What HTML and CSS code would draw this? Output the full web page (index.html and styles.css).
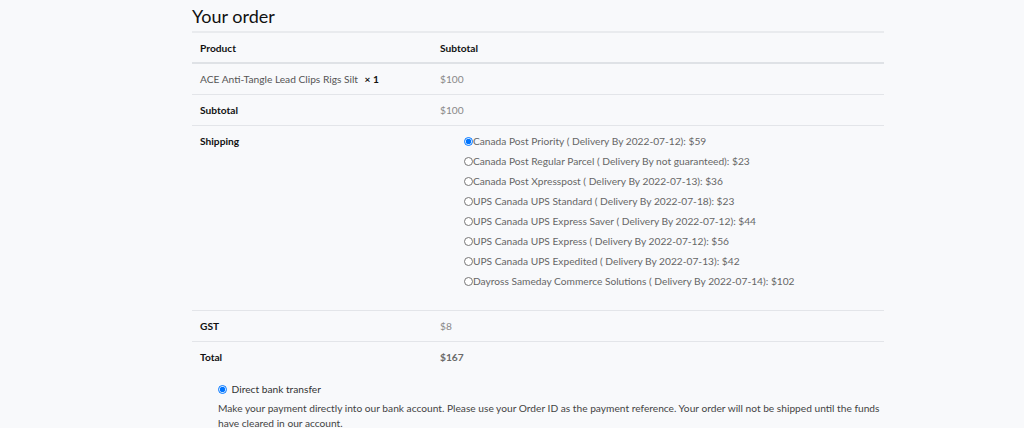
FILE: index.html
```html
<!DOCTYPE html>
<html lang="en">

<head>
  <meta charset="UTF-8">
  <meta name="viewport" content="width=device-width, initial-scale=1.0">
  <title>Checkout</title>
  <link rel="stylesheet" href="styles.css">
</head>

<body>
  <div class="order-container">
    <h3 class="order-title">Your order</h3>

    <table class="order-table">
      <thead>
        <tr>
          <th class="col-product">Product</th>
          <th>Subtotal</th>
        </tr>
      </thead>
      <tbody>
        <tr>
          <td class="product-name">ACE Anti-Tangle Lead Clips Rigs Silt <strong class="qty">&times; 1</strong></td>
          <td class="amount">$100</td>
        </tr>
        <tr>
          <th>Subtotal</th>
          <td class="amount">$100</td>
        </tr>
        <tr>
          <th>Shipping</th>
          <td>
            <ul class="shipping-methods">
              <li><label><input type="radio" name="shipping" checked>Canada Post Priority ( Delivery By 2022-07-12): <span class="price">$59</span></label></li>
              <li><label><input type="radio" name="shipping">Canada Post Regular Parcel ( Delivery By not guaranteed): <span class="price">$23</span></label></li>
              <li><label><input type="radio" name="shipping">Canada Post Xpresspost ( Delivery By 2022-07-13): <span class="price">$36</span></label></li>
              <li><label><input type="radio" name="shipping">UPS Canada UPS Standard ( Delivery By 2022-07-18): <span class="price">$23</span></label></li>
              <li><label><input type="radio" name="shipping">UPS Canada UPS Express Saver ( Delivery By 2022-07-12): <span class="price">$44</span></label></li>
              <li><label><input type="radio" name="shipping">UPS Canada UPS Express ( Delivery By 2022-07-12): <span class="price">$56</span></label></li>
              <li><label><input type="radio" name="shipping">UPS Canada UPS Expedited ( Delivery By 2022-07-13): <span class="price">$42</span></label></li>
              <li><label><input type="radio" name="shipping">Dayross Sameday Commerce Solutions ( Delivery By 2022-07-14): <span class="price">$102</span></label></li>
            </ul>
          </td>
        </tr>
        <tr>
          <th>GST</th>
          <td class="amount">$8</td>
        </tr>
        <tr class="order-total">
          <th>Total</th>
          <td class="amount"><strong>$167</strong></td>
        </tr>
      </tbody>
    </table>

    <ul class="payment-methods">
      <li>
        <label class="payment-label"><input type="radio" name="payment" checked> Direct bank transfer</label>
        <p class="payment-box">Make your payment directly into our bank account. Please use your Order ID as the payment reference. Your order will not be shipped until the funds have cleared in our account.</p>
      </li>
    </ul>
  </div>
</body>

</html>
```

FILE: styles.css
```css
body {
  margin: 0;
  background-color: #f8f9fb;
  font-family: Lato, "Open Sans", sans-serif;
  font-size: 10.2px;
  color: #555;
}

.order-container {
  width: 692px;
  margin: 0 0 0 192px;
  padding-top: 5px;
}

.order-title {
  margin: 0 0 4px;
  font-size: 18px;
  font-weight: 400;
  color: #111;
  line-height: 22px;
}

.order-table {
  width: 100%;
  border-collapse: collapse;
  border-top: 2px solid #e9ebee;
}

.order-table th,
.order-table td {
  text-align: left;
  vertical-align: top;
  padding: 8px 8px;
  line-height: 14px;
  border-bottom: 1px solid #e3e5e9;
}

.order-table th {
  color: #111;
  font-weight: 700;
}

.order-table thead th {
  padding-bottom: 7px;
  border-bottom: 2px solid #dfe2e6;
}

.order-table .col-product {
  width: 224px;
}

.order-table .order-total th,
.order-table .order-total td {
  border-bottom: none;
}

.product-name {
  color: #555;
}

.qty {
  color: #111;
  margin-left: 4px;
}

.amount {
  color: #888;
}

.order-total .amount strong {
  color: #6a6a6a;
}

.shipping-methods {
  list-style: none;
  margin: 0 0 8px;
  padding: 0 0 0 24px;
}

.shipping-methods li {
  height: 20px;
}

.shipping-methods input {
  margin: 0;
  width: 9px;
  height: 9px;
  vertical-align: -1px;
}

.shipping-methods label,
.shipping-methods .price {
  color: #666;
}

.payment-methods {
  list-style: none;
  margin: 0;
  padding: 11px 0 0 26px;
}

.payment-label {
  color: #333;
}

.payment-label input {
  margin: 0 2px 0 0;
  width: 9px;
  height: 9px;
  vertical-align: -1px;
}

.payment-box {
  margin: 6px 0 0;
  line-height: 15px;
  color: #444;
}
```
